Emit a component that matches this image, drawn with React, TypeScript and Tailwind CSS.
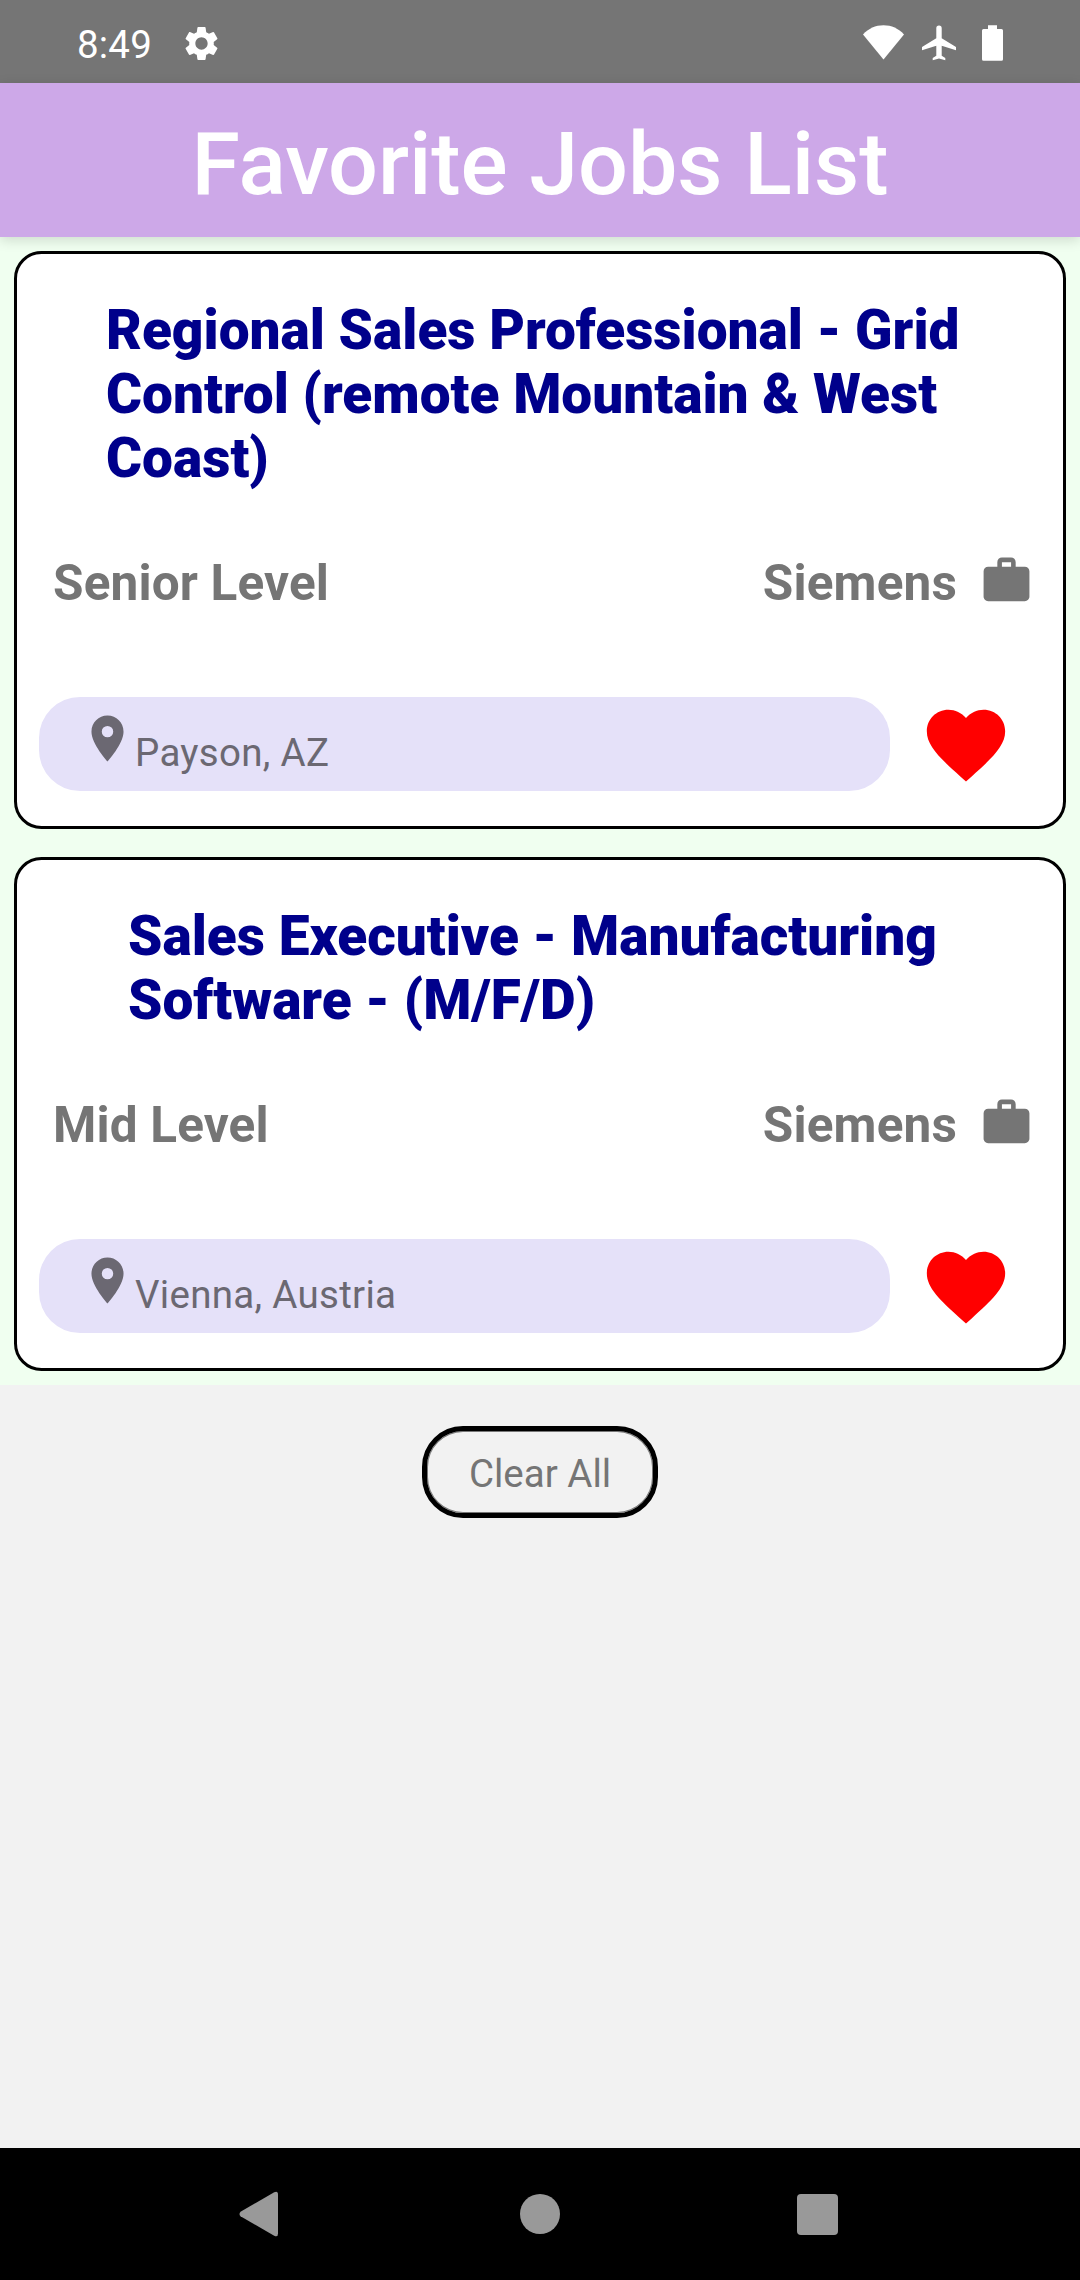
import React from "react";
import { MdFavorite, MdLocationOn, MdSettings, MdWork } from "react-icons/md";

type Job = {
  title: string;
  titleInset: string;
  level: string;
  company: string;
  location: string;
};

const jobs: Job[] = [
  {
    title: "Regional Sales Professional - Grid Control (remote Mountain & West Coast)",
    titleInset: "pl-[89px]",
    level: "Senior Level",
    company: "Siemens",
    location: "Payson, AZ",
  },
  {
    title: "Sales Executive - Manufacturing Software - (M/F/D)",
    titleInset: "pl-[111px]",
    level: "Mid Level",
    company: "Siemens",
    location: "Vienna, Austria",
  },
];

function StatusBar() {
  return (
    <div className="flex h-[83px] shrink-0 items-start bg-[#757575] pl-[77px] pr-[77px] text-white">
      <span className="mt-[22px] text-[38.5px] leading-[45px] tracking-[0.2px]">8:49</span>
      <MdSettings className="ml-[29px] mt-[23px] size-[41px]" />
      <div className="ml-auto flex items-start">
        <svg className="mt-[25px] h-[35px] w-[41px]" viewBox="0 0 41 35" fill="currentColor">
          <path d="M20.5 34.5 0 9.5C5.5 3.5 12.500 0.300 20.500 0.300S35.500 3.500 41 9.500Z" />
        </svg>
        <svg className="ml-[18px] mt-[25px] h-[36px] w-[34px]" viewBox="0 0 34 36" fill="currentColor">
          <path d="M14.300 3.200a2.700 2.700 0 0 1 5.400 0V13.300L34 22v3.200l-14.300-4.500v10l3.600 2.300v2.300L17 33.600l-6.300 1.700V33l3.600-2.300v-10L0 25.200V22l14.300-8.700Z" />
        </svg>
        <svg className="ml-[26px] mt-[25px] h-[36px] w-[21px]" viewBox="0 0 21 36" fill="currentColor">
          <path d="M6 0.300h9V4h4.500A1.500 1.500 0 0 1 21 5.500V34.200a1.500 1.500 0 0 1-1.500 1.500h-18A1.500 1.500 0 0 1 0 34.200V5.500A1.500 1.500 0 0 1 1.500 4H6Z" />
        </svg>
      </div>
    </div>
  );
}

function JobCard({ job }: { job: Job }) {
  return (
    <article className="rounded-[27.500px] border-[3px] border-black bg-white pb-[35px] pt-[44px]">
      <h2 className={`pr-[60px] text-[55px] font-black leading-[64px] text-[#00008b] ${job.titleInset}`}>
        {job.title}
      </h2>
      <div className="mt-[64px] flex h-[58px] items-start pl-[36px] pr-[29px] text-[49.500px] font-bold leading-[58px] tracking-[0.15px] text-[#757575]">
        <span>{job.level}</span>
        <span className="ml-auto">{job.company}</span>
        <MdWork className="-mt-px ml-[22px] size-[55px]" />
      </div>
      <div className="mt-[85px] flex h-[94px] items-center pl-[22px]">
        <div className="flex h-[94px] w-[851px] items-start rounded-[41px] bg-[#e5e1f9] pl-[41px] text-[#6b6872]">
          <MdLocationOn className="mt-[14px] size-[55px]" />
          <span className="mt-[33px] text-[38.500px] leading-[45px] tracking-[0.3px]">{job.location}</span>
        </div>
        <MdFavorite className="ml-[29px] mt-[2px] size-[94px] text-[#ff0000]" />
      </div>
    </article>
  );
}

function NavBar() {
  return (
    <nav className="flex h-[132px] shrink-0 items-center bg-black pl-[239px] pr-[242px] text-[#999999]">
      <svg className="h-[46px] w-[39px]" viewBox="0 0 39 46" fill="currentColor">
        <path d="M1.500 20.700 35.200 1.200Q39 -0.500 39 3.500V42.500Q39 46.500 35.200 44.800L1.500 25.300Q-0.500 23 1.500 20.700Z" />
      </svg>
      <span className="ml-[242px] size-[40px] rounded-full bg-[#999999]" />
      <span className="ml-auto size-[41px] rounded-[4px] bg-[#999999]" />
    </nav>
  );
}

export default function App() {
  return (
    <div className="flex h-[2280px] w-[1080px] flex-col bg-[#f2f2f2] font-['Roboto',sans-serif]">
      <StatusBar />
      <header className="relative flex h-[154px] shrink-0 items-center justify-center bg-[#cda8e8] shadow-[0_3px_12px_rgba(0,0,0,0.150)]">
        <h1 className="pt-[7px] text-[88px] font-medium leading-[104px] tracking-[-0.1px] text-white">Favorite Jobs List</h1>
      </header>
      <main className="flex flex-1 flex-col items-center">
        <section className="flex w-full flex-col gap-[28px] bg-[#f0fff0] p-[14px]">
          {jobs.map((job) => (
            <JobCard key={job.location} job={job} />
          ))}
        </section>
        <button className="mt-[41px] h-[92px] w-[236px] rounded-[41px] border-[5px] border-black pt-[2px] text-[38.500px] leading-[45px] text-[#757575] shadow-[inset_0_0_0_1px_#777777]">
          Clear All
        </button>
      </main>
      <NavBar />
    </div>
  );
}
